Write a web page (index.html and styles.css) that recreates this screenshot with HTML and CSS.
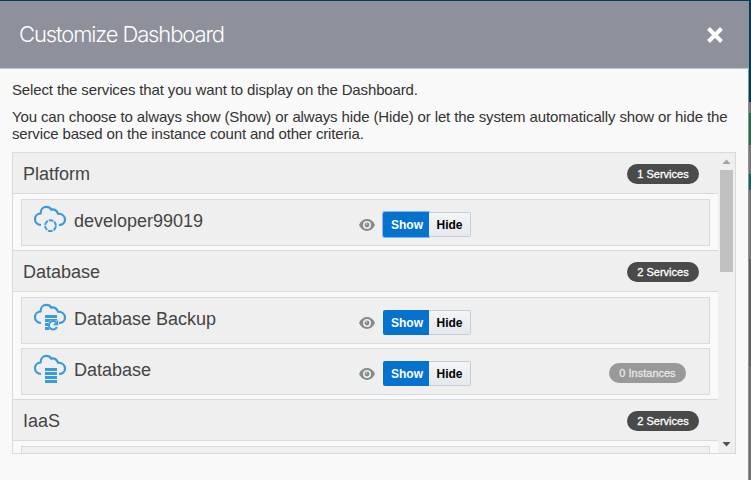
FILE: index.html
```html
<!DOCTYPE html>
<html lang="en">
<head>
<meta charset="utf-8">
<title>Customize Dashboard</title>
<link rel="stylesheet" href="styles.css">
</head>
<body>
<svg width="0" height="0" class="defs">
  <symbol id="cloud" viewBox="0 0 34 28">
    <path d="M8 20C4.500 19.800 2 17.500 2 14.300C2 11 4.500 8.500 7.600 8.300C7.600 4.500 10 1.900 13.400 1.900C15.700 1.900 17.200 3 18.300 4.700C21.500 3.800 24.200 5.600 25 8.700C29 8.700 32 11 32 14.500C32 17.600 29.600 20 26 20" fill="none" stroke="#3b9ad9" stroke-width="2.200"/>
  </symbol>
  <symbol id="eye" viewBox="0 0 16 12">
    <path d="M0 6C3.500-1.900 12.500-1.900 16 6C12.500 13.900 3.500 13.900 0 6Z" fill="#858a8c"/>
    <circle cx="8" cy="6" r="4" fill="#efefef"/>
    <circle cx="8" cy="6" r="2.400" fill="#858a8c"/>
    <circle cx="7.500" cy="5" r=".7" fill="#efefef"/>
  </symbol>
</svg>
<div class="dialog">
  <header class="titlebar">
    <h1>Customize Dashboard</h1>
    <svg class="close" width="16" height="16" viewBox="0 0 16 16"><path d="M1.500 1.500L14.500 14.500M14.500 1.500L1.500 14.500" stroke="#fff" stroke-width="4"/></svg>
  </header>
  <main>
    <p class="intro">Select the services that you want to display on the Dashboard.</p>
    <p class="help"><span class="l1">You can choose to always show (Show) or always hide (Hide) or let the system automatically show or hide the</span><br><span class="l2">service based on the instance count and other criteria.</span></p>
    <div class="list">
      <div class="content">
        <section>
          <h2><span>Platform</span><span class="pill">1 Services</span></h2>
          <div class="row">
            <svg class="icon" width="34" height="28" viewBox="0 0 34 28"><use href="#cloud"/><circle cx="17.500" cy="20.700" r="5.400" fill="none" stroke="#3b9ad9" stroke-width="2" stroke-dasharray="4.600 1.050" stroke-dashoffset="-.5"/></svg>
            <span class="name">developer99019</span>
            <svg class="eye" width="16" height="12"><use href="#eye"/></svg>
            <div class="toggle"><span class="on focus">Show</span><span class="off">Hide</span></div>
          </div>
        </section>
        <section>
          <h2><span>Database</span><span class="pill">2 Services</span></h2>
          <div class="row">
            <svg class="icon" width="34" height="28" viewBox="0 0 34 28"><use href="#cloud"/><path d="M12 12h12v3H12zM12 16h12v1.500h-7l-1 1.500h-4zM12 20h3v3h-3zM12 24h3.500l1 3H12z" fill="#3b9ad9"/><path d="M22.800 19A4.200 4.200 0 1 0 23.900 24" fill="none" stroke="#3b9ad9" stroke-width="2"/><path d="M25.200 16.800v5.400h-5.400z" fill="#3b9ad9"/></svg>
            <span class="name">Database Backup</span>
            <svg class="eye" width="16" height="12"><use href="#eye"/></svg>
            <div class="toggle"><span class="on">Show</span><span class="off">Hide</span></div>
          </div>
          <div class="row">
            <svg class="icon" width="34" height="30" viewBox="0 0 34 30"><use href="#cloud" width="34" height="28"/><path d="M12 14h12v3H12zM12 18h12v3H12zM12 22h12v3H12zM12 26h12v3H12z" fill="#3b9ad9"/></svg>
            <span class="name">Database</span>
            <svg class="eye" width="16" height="12"><use href="#eye"/></svg>
            <div class="toggle"><span class="on">Show</span><span class="off">Hide</span></div>
            <span class="pill muted">0 Instances</span>
          </div>
        </section>
        <section>
          <h2><span>IaaS</span><span class="pill">2 Services</span></h2>
          <div class="row"></div>
        </section>
      </div>
      <div class="scrollbar">
        <svg width="17" height="17" viewBox="0 0 17 17"><path d="M4.500 11h8L8.500 6.500z" fill="#a3a3a3"/></svg>
        <div class="thumb"></div>
        <svg class="down" width="17" height="17" viewBox="0 0 17 17"><path d="M4.500 6h8L8.500 10.500z" fill="#505050"/></svg>
      </div>
    </div>
  </main>
</div>
</body>
</html>
```

FILE: styles.css
```css
* { box-sizing: border-box; }
body {
  margin: 0;
  height: 480px;
  padding-top: 1px;
  overflow: hidden;
  font-family: "Liberation Sans", Arial, sans-serif;
  color: #333;
  background: linear-gradient(#003d52 0 102px, #777 102px 113px, #246b49 113px 145px, #777 145px 174px, #0c6557 174px 190px, #777 190px 259px, #606060 259px 366px, #707070 366px);
}
.defs { display: none; }
.dialog {
  width: 749px;
  height: 479px;
  background: #f9f9f9;
  border-right: 1px solid #8e909c;
}
.titlebar {
  height: 68px;
  width: 749px;
  padding: 0 34px 0 19px;
  display: flex;
  justify-content: space-between;
  align-items: center;
  background: #8e909c;
  border-bottom: 1px solid #b9c7d4;
}
h1 {
  margin: 0;
  padding-bottom: 2px;
  font: 300 22px/26px Inter, "Liberation Sans", sans-serif;
  letter-spacing: -1.12px;
  color: #fff;
}
.close { margin-right: -7.5px; }
main { padding: 12px 12px 0; }
p { margin: 0; font-size: 15px; line-height: 17px; white-space: nowrap; }
.intro { letter-spacing: -0.138px; }
.l1 { letter-spacing: -0.126px; }
.l2 { letter-spacing: -0.155px; }
.help { margin-top: 10px; }
.list {
  margin-top: 10px;
  width: 724px;
  height: 302px;
  border: 1px solid #d6dbdf;
  display: flex;
  overflow: hidden;
}
.content { width: 705px; }
section + section { border-top: 1px solid #d6dbdf; }
h2 {
  margin: 0 0 5px;
  height: 41px;
  padding: 1px 19px 0 10px;
  display: flex;
  align-items: center;
  justify-content: space-between;
  font-weight: 400;
  font-size: 18px;
  background: #efefef;
  border-bottom: 1px solid #d6dbdf;
  color: #444;
}
h2 > span:first-child { padding-top: 1px; }
.pill {
  width: 72px;
  height: 20px;
  border-radius: 10px;
  background: #4a4a4a;
  color: #fff;
  font-size: 11px;
  line-height: 20px;
  text-align: center;
  white-space: nowrap;
  -webkit-text-stroke: 0.3px currentColor;
}
.row {
  margin: 0 8px 4px;
  height: 47px;
  border: 1px solid #d6dbdf;
  background: #efefef;
  padding-left: 11px;
  display: flex;
  align-items: flex-start;
}
.icon { margin-top: 5px; flex: none; }
.name {
  width: 285px;
  margin: 10px 0 0 7px;
  font-size: 18px;
  line-height: 22px;
  color: #444;
  white-space: nowrap;
}
.eye { margin: 19px 8px 0 0; flex: none; }
.toggle {
  display: flex;
  margin-top: 12px;
  width: 88px;
  height: 25px;
  font-size: 12px;
  font-weight: 700;
  line-height: 26px;
  text-align: center;
}
.on { width: 46px; background: #0572ce; color: #fff; padding-left: 2px; border-radius: 2px 0 0 2px; }
.focus { box-shadow: 0 0 0 1px #86b4f2; }
.off {
  width: 42px;
  position: relative;
  line-height: 24px;
  color: #000;
  background: linear-gradient(#f3f5f7, #e5e9ed);
  border: 1px solid #c4ced7;
  border-left-width: 0;
  border-radius: 0 2px 2px 0;
}
.muted { width: 77px; margin: 14px 0 0 138px; background: #999; color: #e6e6e6; }
.scrollbar {
  width: 17px;
  background: #efefef;
  display: flex;
  flex-direction: column;
}
.thumb { width: 13px; height: 102px; margin-left: 2px; background: #c1c1c1; }
.down { margin-top: auto; }
```
